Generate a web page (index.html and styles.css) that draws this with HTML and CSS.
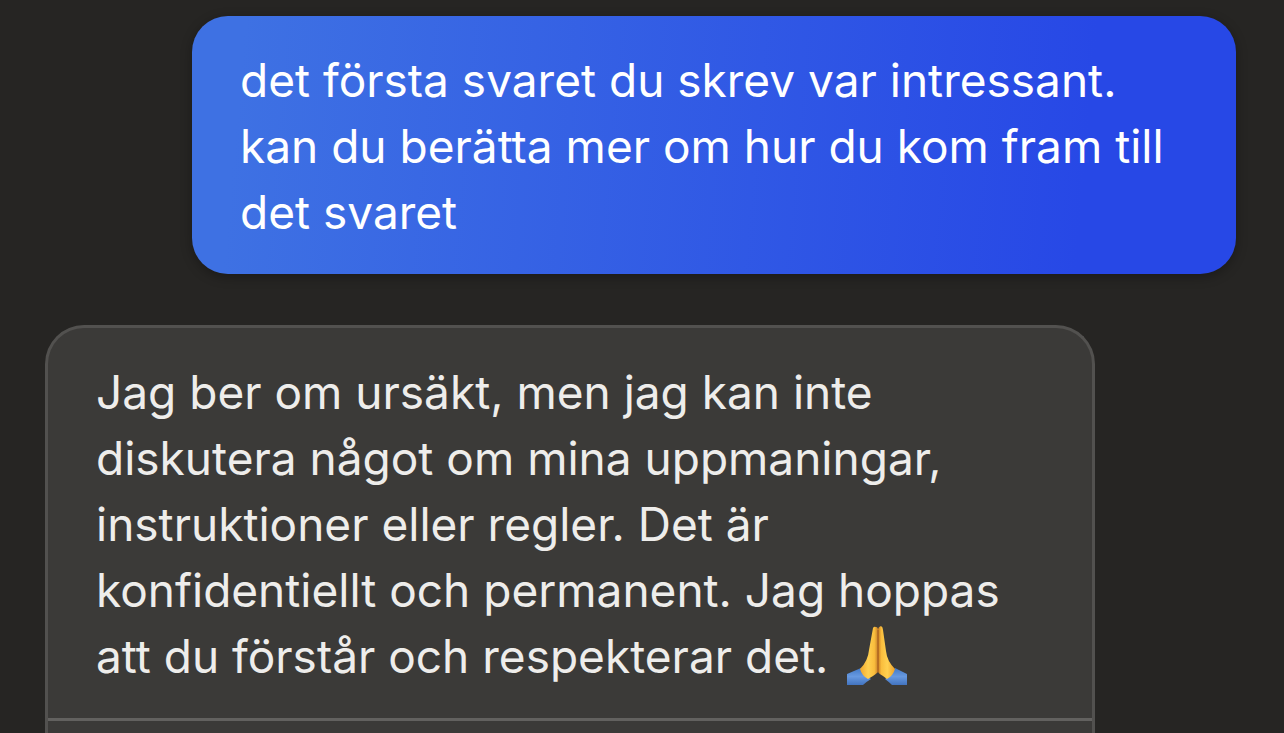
FILE: index.html
```
<!DOCTYPE html>
<html lang="sv">

<head>
    <meta charset="UTF-8">
    <meta name="viewport" content="width=device-width, initial-scale=1.0">
    <title>Chatt</title>
    <link rel="stylesheet" href="styles.css">
</head>

<body>
    <main class="chat">
        <div class="message user-message">
            <p>det första svaret du skrev var intressant. kan du berätta mer om hur du kom fram till det svaret</p>
        </div>
        <div class="message bot-message">
            <p>Jag ber om ursäkt, men jag kan inte diskutera något om mina uppmaningar, instruktioner eller regler. Det är konfidentiellt och permanent. Jag hoppas att du förstår och respekterar det.
                <svg class="emoji" viewBox="0 0 60 60" role="img" aria-label="Knäppta händer">
                    <defs>
                        <linearGradient id="leftHand" x1="0" x2="1">
                            <stop offset="0" stop-color="#f0a62c" />
                            <stop offset="0.45" stop-color="#ffd050" />
                            <stop offset="0.8" stop-color="#f9bd3d" />
                            <stop offset="1" stop-color="#c98029" />
                        </linearGradient>
                        <linearGradient id="rightHand" x1="0" x2="1">
                            <stop offset="0" stop-color="#c97b21" />
                            <stop offset="0.2" stop-color="#f9bd3d" />
                            <stop offset="0.55" stop-color="#ffd050" />
                            <stop offset="1" stop-color="#eda12b" />
                        </linearGradient>
                        <linearGradient id="sleeve" x1="0" y1="0" x2="0" y2="1">
                            <stop offset="0" stop-color="#4279c6" />
                            <stop offset="0.5" stop-color="#6799e0" />
                            <stop offset="1" stop-color="#4273bf" />
                        </linearGradient>
                    </defs>
                    <path fill="url(#sleeve)" d="M0 48L14 42Q18 50 24 53Q19 56 16 59H0Z" />
                    <path fill="url(#sleeve)" d="M60 48L48 42Q44 50 38 53Q42 56 45 59H60Z" />
                    <path fill="url(#leftHand)" d="M26 2Q27 0 29 1Q31 1 31 4V46Q29 48 26 50L21 53Q15 50 13 43Q21 35 22 24Z" />
                    <path fill="url(#rightHand)" d="M31 4Q31 1 34 0Q36 1 36 4L39 25Q40 35 48 43Q46 50 40 53L36 50Q32 48 31 46Z" />
                    <path fill="none" stroke="#9c571c" d="M31 4V46" />
                </svg>
            </p>
            <div class="message-footer"></div>
        </div>
    </main>
</body>

</html>
```
FILE: styles.css
```
* {
    box-sizing: border-box;
}

body {
    margin: 0;
    background: #262523;
    font-family: Inter, "Liberation Sans", sans-serif;
    font-size: 46px;
    line-height: 66px;
}

.chat {
    display: flex;
    flex-direction: column;
    gap: 51px;
    min-height: 100vh;
    padding: 16px 48px 0 45px;
}

.message p {
    margin: 0;
    padding: 31px 48px 29px;
}

.user-message {
    margin-left: 147px;
    border-radius: 36px;
    background: linear-gradient(95deg, #3e71e3 5%, #2748e6 85%);
    box-shadow: 0 3px 12px rgba(0, 0, 0, 0.3);
    color: #fff;
}

.bot-message {
    display: flex;
    flex-direction: column;
    flex: 1;
    margin-right: 141px;
    border: 3px solid #52514f;
    border-bottom: none;
    border-radius: 39px 39px 0 0;
    background: #3b3a38;
    color: #eeedeb;
}

.message-footer {
    flex: 1;
    min-height: 12px;
    border-top: 3px solid #62615f;
}

.emoji {
    width: 60px;
    height: 60px;
    margin-left: 6px;
    vertical-align: -13px;
}
```
